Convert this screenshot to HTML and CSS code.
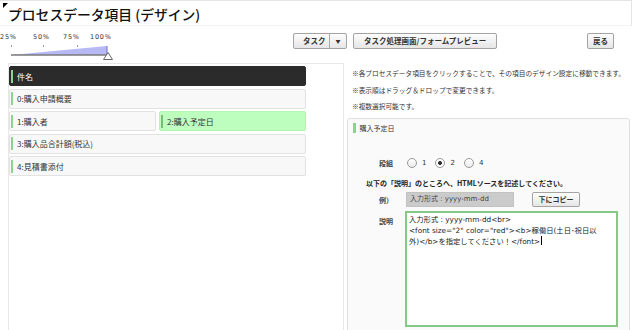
FILE: index.html
```html
<!DOCTYPE html>
<html lang="ja">
<head>
    <meta charset="UTF-8">
    <title>プロセスデータ項目 (デザイン)</title>
    <link rel="stylesheet" href="styles.css">
</head>
<body>
    <div class="title-bar">
        <h1 class="title">プロセスデータ項目 (デザイン)</h1>
    </div>

    <div class="toolbar">
        <div class="zoom">
            <div class="zoom-labels">
                <span class="z25">25%</span>
                <span class="z50">50%</span>
                <span class="z75">75%</span>
                <span>100%</span>
            </div>
            <svg class="zoom-track" width="120" height="18" viewBox="0 0 120 18">
                <line x1="11.5" y1="3" x2="11.5" y2="5" stroke="#999" />
                <line x1="43.5" y1="3" x2="43.5" y2="5" stroke="#999" />
                <line x1="77.5" y1="3" x2="77.5" y2="5" stroke="#999" />
                <polygon points="11,13 107,4 107,13" fill="#b7b9f5" />
                <line x1="107" y1="4" x2="107" y2="13" stroke="#7e82da" stroke-width="1.2" />
                <line x1="11" y1="13" x2="107" y2="13" stroke="#7a7a7a" stroke-width="1.5" />
                <polygon points="103.5,17.5 108,10.5 112.5,17.5" fill="#fff" stroke="#666" />
            </svg>
        </div>

        <div class="actions">
            <div class="split-btn">
                <span class="split-main">タスク</span>
                <span class="split-arrow">▼</span>
            </div>
            <button type="button" class="btn">タスク処理画面/フォームプレビュー</button>
        </div>
        <button type="button" class="btn back">戻る</button>
    </div>

    <div class="main">
        <!-- 項目の一覧 -->
        <div class="item-list">
            <div class="item item-head">件名</div>
            <div class="item">0:購入申請概要</div>
            <div class="item-row">
                <div class="item">1:購入者</div>
                <div class="item selected">2:購入予定日</div>
            </div>
            <div class="item">3:購入品合計額(税込)</div>
            <div class="item">4:見積書添付</div>
        </div>

        <div class="detail">
            <div class="notes">
                <p>※各プロセスデータ項目をクリックすることで、その項目のデザイン設定に移動できます。</p>
                <p>※表示順はドラッグ＆ドロップで変更できます。</p>
                <p>※複数選択可能です。</p>
            </div>

            <div class="design-box">
                <div class="box-title">購入予定日</div>

                <div class="form-row columns">
                    <span class="form-label">段組</span>
                    <div class="radio-group">
                        <label><input type="radio" name="cols"> 1</label>
                        <label><input type="radio" name="cols" checked> 2</label>
                        <label><input type="radio" name="cols"> 4</label>
                    </div>
                </div>

                <p class="instruction">以下の「説明」のところへ、HTMLソースを記述してください。</p>

                <div class="form-row example">
                    <span class="form-label">例）</span>
                    <div class="example-value">入力形式 : yyyy-mm-dd</div>
                    <button type="button" class="btn copy">下にコピー</button>
                </div>

                <div class="form-row description">
                    <span class="form-label">説明</span>
                    <div class="source-box">入力形式 : yyyy-mm-dd&lt;br&gt;<br>&lt;font size="2" color="red"&gt;&lt;b&gt;稼働日(土日･祝日以<br>外)&lt;/b&gt;を指定してください！&lt;/font&gt;<span class="caret"></span></div>
                </div>
            </div>
        </div>
    </div>
</body>
</html>
```

FILE: styles.css
```css
body {
    margin: 0;
    font-family: "DejaVu Sans", "Noto Sans CJK JP", sans-serif;
    font-size: 7px;
    color: #333;
    background-color: #fff;
    overflow: hidden;
}

/* タイトル */
.title-bar {
    position: relative;
    height: 26px;
    margin-right: 1px;
    border-top: 1px solid #e4e4e4;
    border-right: 1px solid #e4e4e4;
    border-bottom: 1px solid #f2f2f2;
    box-sizing: border-box;
}
.title-bar::before {
    content: "";
    position: absolute;
    left: 3px;
    top: 2px;
    border-top: 5px solid #000;
    border-right: 5px solid transparent;
}
.title {
    margin: 0;
    padding: 2px 0 0 8px;
    font-family: "Noto Sans CJK JP", sans-serif;
    font-size: 13.8px;
    font-weight: 500;
    line-height: 22px;
    color: #111;
}

/* ツールバー */
.toolbar {
    display: flex;
    align-items: flex-start;
    height: 37px;
    padding: 7px 19px 0 0;
    box-sizing: border-box;
}
.zoom {
    width: 120px;
    margin-top: -1px;
}
.zoom-labels {
    display: flex;
    height: 10px;
    font-size: 6.5px;
    line-height: 10px;
    letter-spacing: 0.8px;
    color: #333;
}
.zoom-labels .z25 { width: 33px; }
.zoom-labels .z50 { width: 30px; }
.zoom-labels .z75 { width: 27px; }
.zoom-track {
    display: block;
}
.actions {
    display: flex;
    gap: 6px;
    margin-left: 173px;
}
.btn, .split-btn {
    height: 16px;
    padding: 0 10px;
    border: 1px solid #a3a3a3;
    border-radius: 2px;
    background: linear-gradient(#fdfdfd, #e6e6e6);
    font-family: "Noto Sans CJK JP", sans-serif;
    font-size: 7.5px;
    font-weight: bold;
    line-height: 14px;
    color: #333;
    box-sizing: border-box;
}
.split-btn {
    display: flex;
    width: 54px;
    padding: 0;
}
.split-main {
    width: 36px;
    padding-left: 9px;
    border-right: 1px solid #aaa;
    box-sizing: border-box;
}
.split-arrow {
    flex: 1;
    text-align: center;
    font-size: 5px;
}
.btn.back {
    margin-left: auto;
    width: 27px;
    padding: 0;
}

/* 項目一覧 */
.main {
    display: flex;
    height: 267px;
    overflow: hidden;
}
.item-list {
    width: 336px;
    margin-left: 8px;
    padding-top: 2px;
    border: 1px solid #e8e8e8;
    border-bottom: none;
    box-sizing: border-box;
}
.item {
    display: flex;
    align-items: center;
    width: 297px;
    height: 20px;
    margin-bottom: 2.5px;
    border: 1px solid #e2e2e2;
    border-radius: 2px;
    background-color: #f8f8f8;
    font-family: "Noto Sans CJK JP", sans-serif;
    font-size: 8px;
    color: #333;
    box-sizing: border-box;
}
.item::before {
    content: "";
    width: 2px;
    height: 13px;
    margin: 0 4px 0 1px;
    background-color: #8fd28f;
}
.item-head {
    border-color: #2b2b2b;
    background-color: #2b2b2b;
    color: #fff;
}
.item-row {
    display: flex;
    gap: 3px;
    width: 297px;
}
.item-row .item {
    width: 147px;
}
.item.selected {
    border-color: #b3f3b3;
    background-color: #bdfdbd;
}
.item.selected::before {
    background-color: #7cba7c;
}

/* 右側 */
.detail {
    width: 283px;
    margin-left: 3px;
}
.notes {
    padding: 2px 0 0 5px;
}
.notes p {
    margin: 0;
    font-family: "Noto Sans CJK JP", sans-serif;
    font-size: 6.7px;
    line-height: 16.5px;
    color: #333;
}
.design-box {
    height: 230px;
    margin-top: 3.5px;
    border: 1px solid #e0e0e0;
    border-radius: 3px;
    background-color: #fafafa;
}
.box-title {
    display: flex;
    align-items: center;
    height: 10px;
    margin-top: 4px;
    font-family: "Noto Sans CJK JP", sans-serif;
    line-height: 10px;
}
.box-title::before {
    content: "";
    width: 2.5px;
    height: 10px;
    margin: 0 4px 0 5px;
    background-color: #8fd28f;
}
.form-row {
    display: flex;
    align-items: center;
}
.form-label {
    width: 45px;
    margin-right: 13px;
    text-align: right;
    font-family: "Noto Sans CJK JP", sans-serif;
    font-weight: bold;
    color: #444;
}
.columns {
    height: 14px;
    margin-top: 23px;
}
.radio-group {
    display: flex;
    gap: 9px;
    margin-left: 1px;
}
.radio-group label {
    display: flex;
    align-items: center;
    gap: 5px;
}
.radio-group input {
    appearance: none;
    width: 10px;
    height: 10px;
    margin: 0;
    border: 1px solid #999;
    border-radius: 50%;
    background: linear-gradient(#fff, #ececec);
}
.radio-group input:checked {
    background: radial-gradient(circle, #333 0 1.8px, #fff 2.2px);
}
.instruction {
    margin: 7px 0 0 18px;
    font-family: "Noto Sans CJK JP", sans-serif;
    font-weight: bold;
    line-height: 12px;
    color: #222;
}
.example {
    height: 15px;
    margin-top: 3px;
}
.example-value {
    width: 108px;
    height: 15px;
    padding-left: 3px;
    border: 1px solid #c2c2c2;
    background-color: #cbcbcb;
    line-height: 13px;
    color: #444;
    box-sizing: border-box;
}
.btn.copy {
    width: 48px;
    height: 15px;
    margin-left: 18px;
    padding: 0;
    font-size: 7px;
    line-height: 13px;
}
.description {
    align-items: flex-start;
    margin-top: 4px;
}
.description .form-label {
    margin-top: 5px;
    margin-right: 12px;
}
.source-box {
    width: 213px;
    height: 116px;
    padding: 2px 0 0 2px;
    border: 2px solid #86c886;
    background-color: #fff;
    font-size: 7.3px;
    line-height: 10.5px;
    white-space: nowrap;
    color: #222;
    box-sizing: border-box;
}
.caret {
    display: inline-block;
    width: 1px;
    height: 9px;
    margin-left: 1px;
    vertical-align: -1px;
    background-color: #000;
}
```
